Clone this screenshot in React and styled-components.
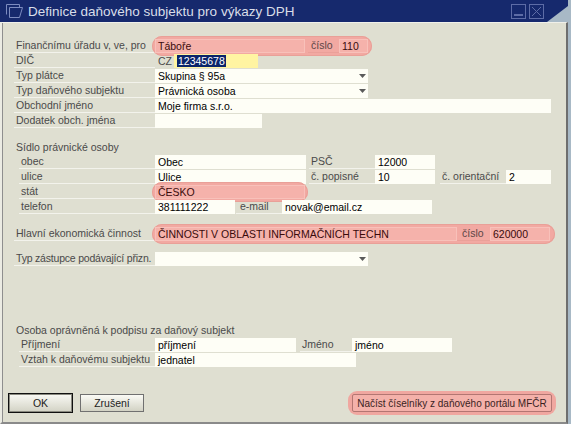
import React from "react";
import styled, { createGlobalStyle } from "styled-components";

const GlobalStyle = createGlobalStyle`
  html, body { margin: 0; padding: 0; background: #a8b9c6; }
  body { font-family: "Liberation Sans", Arial, sans-serif; font-size: 10.5px; }
  #root { width: 571px; height: 424px; overflow: hidden; }
  * { box-sizing: border-box; }
`;

const Window = styled.div`
  width: 568px;
  height: 424px;
  display: flex;
  flex-direction: column;
`;

const TitleBar = styled.div`
  flex: none;
  height: 22px;
  display: flex;
  align-items: center;
  padding-left: 6px;
  background: #16296d;
  color: #d9dee9;
  font-size: 13.5px;
  clip-path: polygon(0 0, 100% 0, 100% 6px, calc(100% - 21px) 100%, 0 100%);
`;

const TitleText = styled.span`
  margin-left: 5px;
`;

const TitleButtons = styled.div`
  margin-left: auto;
  margin-right: 24px;
  display: flex;
  gap: 3px;
`;

const Body = styled.div`
  flex: 1;
  display: flex;
  flex-direction: column;
  background: #dfdfd1;
  border-top: 1px solid #f0f0ea;
  border-left: 2px solid #ebebe3;
  border-right: 2px solid #6e6e6e;
  border-bottom: 2px solid #8a8a8a;
  box-shadow: inset 1px 0 0 #8e8e8e;
`;

const Form = styled.div`
  padding: 16px 0 0 12px;
`;

const Row = styled.div`
  display: flex;
  height: 14px;
  margin-top: ${(p) => p.$mt || 0}px;
  margin-bottom: 1px;
  padding-left: ${(p) => (p.$indent ? 5 : 0)}px;
`;

const Heading = styled.div`
  height: 14px;
  line-height: 14px;
  margin-top: ${(p) => p.$mt || 0}px;
  margin-bottom: 1px;
  padding-left: 2px;
  color: #4a4a4a;
`;

const Label = styled.div`
  flex: none;
  width: ${(p) => p.$w}px;
  margin-left: ${(p) => p.$ml || 0}px;
  padding-left: ${(p) => p.$pl ?? 2}px;
  height: 14px;
  line-height: 13px;
  color: #4a4a4a;
  letter-spacing: ${(p) => (p.$tight ? "-0.2px" : "0")};
  border-bottom: 1px solid #f3f3ec;
  white-space: nowrap;
  overflow: hidden;
`;

const Field = styled.div`
  flex: none;
  width: ${(p) => p.$w}px;
  height: 14px;
  line-height: 14px;
  padding-left: 3px;
  background: #fefef6;
  color: #000;
  white-space: nowrap;
  overflow: hidden;
`;

const Combo = styled(Field)`
  display: flex;
  align-items: center;
  padding-right: 2px;
`;

const Arrow = styled.svg`
  margin-left: auto;
  display: block;
`;

const Highlight = styled.div`
  display: flex;
  margin: -3px -${(p) => p.$pr}px -3px -3px;
  padding: 3px ${(p) => p.$pr}px 3px 3px;
  border-radius: 10px;
  background: #f2a9a2;
  box-shadow: inset 0 0 0 1px #e9a098;
`;

const PinkField = styled(Field)`
  background: #f5b2ab;
  box-shadow: inset 0 0 0 1px #f8c1ba;
  color: #3a0b0b;
`;

const PinkLabel = styled(Label)`
  color: #5b4646;
  border-bottom-color: #eaa099;
`;

const Prefix = styled.div`
  flex: none;
  width: 19px;
  padding-left: 3px;
  line-height: 14px;
  color: #4a4a4a;
`;

const YellowField = styled(Field)`
  background: #fff4a2;
`;

const Selected = styled.span`
  background: #0a246a;
  color: #fff;
  padding: 0 1px;
`;

const Footer = styled.div`
  display: flex;
  align-items: center;
  gap: 7px;
  margin-top: 23px;
  padding: 0 10px 0 6px;
`;

const Button = styled.button`
  font-family: "Liberation Sans", Arial, sans-serif;
  font-size: 10.5px;
  width: ${(p) => p.$w}px;
  height: ${(p) => p.$h}px;
  padding: 0;
  color: #222;
  background: linear-gradient(#fafaf5, #d2d2c4);
  border: 1px solid ${(p) => (p.$default ? "#111" : "#707070")};
  box-shadow: ${(p) => (p.$default ? "inset 0 0 0 1px #8a8a80" : "none")};
`;

const Glow = styled.div`
  margin-left: auto;
  padding: 3px 4px;
  border-radius: 9px;
  background: #f0a7a0;
`;

const PortalButton = styled.button`
  display: block;
  font-family: "Liberation Sans", Arial, sans-serif;
  font-size: 10px;
  white-space: nowrap;
  width: 200px;
  height: 18px;
  padding: 0;
  color: #3a1f1f;
  background: #f4b1aa;
  border: 1px solid #b37672;
  border-radius: 2px;
`;

const ComboArrow = () => (
  <Arrow width="7" height="4" viewBox="0 0 7 4">
    <polygon points="0,0 7,0 3.5,4" fill="#5a5a5a" />
  </Arrow>
);

export default function App() {
  return (
    <>
      <GlobalStyle />
      <Window>
        <TitleBar>
          <svg width="17" height="14" viewBox="0 0 17 14" fill="none" stroke="#7d8cc0" strokeWidth="1">
            <path d="M0.5 10.5 V0.5 H13.5 V3.5" />
            <path d="M3.5 3.5 H16.5 L13.5 13.5 H3.5 Z" />
          </svg>
          <TitleText>Definice daňového subjektu pro výkazy DPH</TitleText>
          <TitleButtons>
            <svg width="15" height="15" viewBox="0 0 15 15" fill="none">
              <rect x="0.5" y="0.5" width="14" height="14" stroke="#5d6ca6" />
              <rect x="3" y="10" width="9" height="2" fill="#5d6ca6" />
            </svg>
            <svg width="15" height="15" viewBox="0 0 15 15" fill="none">
              <rect x="0.5" y="0.5" width="14" height="14" stroke="#5d6ca6" />
              <path d="M3 3 L12 12 M12 3 L3 12" stroke="#5d6ca6" />
            </svg>
          </TitleButtons>
        </TitleBar>
        <Body>
          <Form>
            <Row>
              <Label $w={141}>Finančnímu úřadu v, ve, pro</Label>
              <Highlight $pr={4}>
                <PinkField $w={150}>Táboře</PinkField>
                <PinkLabel $w={31} $ml={3} $pl={3}>číslo</PinkLabel>
                <PinkField $w={29}>110</PinkField>
              </Highlight>
            </Row>
            <Row>
              <Label $w={141}>DIČ</Label>
              <Prefix>CZ</Prefix>
              <YellowField $w={84}>
                <Selected>12345678</Selected>
              </YellowField>
            </Row>
            <Row>
              <Label $w={141}>Typ plátce</Label>
              <Combo $w={213}>
                Skupina § 95a
                <ComboArrow />
              </Combo>
            </Row>
            <Row>
              <Label $w={141}>Typ daňového subjektu</Label>
              <Combo $w={213}>
                Právnická osoba
                <ComboArrow />
              </Combo>
            </Row>
            <Row>
              <Label $w={141}>Obchodní jméno</Label>
              <Field $w={396}>Moje firma s.r.o.</Field>
            </Row>
            <Row>
              <Label $w={141}>Dodatek obch. jména</Label>
              <Field $w={107} />
            </Row>

            <Heading $mt={12}>Sídlo právnické osoby</Heading>
            <Row $indent>
              <Label $w={136}>obec</Label>
              <Field $w={151}>Obec</Field>
              <Label $w={66} $ml={3}>PSČ</Label>
              <Field $w={60}>12000</Field>
            </Row>
            <Row $indent>
              <Label $w={136}>ulice</Label>
              <Field $w={151}>Ulice</Field>
              <Label $w={66} $ml={3}>č. popisné</Label>
              <Field $w={60}>10</Field>
              <Label $w={66} $ml={5}>č. orientační</Label>
              <Field $w={45}>2</Field>
            </Row>
            <Row $indent>
              <Label $w={136}>stát</Label>
              <Highlight $pr={3}>
                <PinkField $w={150}>ČESKO</PinkField>
              </Highlight>
            </Row>
            <Row $indent>
              <Label $w={136}>telefon</Label>
              <Field $w={80}>381111222</Field>
              <Label $w={46} $ml={1} $pl={4}>e-mail</Label>
              <Field $w={150}>novak@email.cz</Field>
            </Row>

            <Row $mt={13}>
              <Label $w={141}>Hlavní ekonomická činnost</Label>
              <Highlight $pr={5}>
                <PinkField $w={302}>ČINNOSTI V OBLASTI INFORMAČNÍCH TECHN</PinkField>
                <PinkLabel $w={33} $pl={5}>číslo</PinkLabel>
                <PinkField $w={60}>620000</PinkField>
              </Highlight>
            </Row>
            <Row $mt={11}>
              <Label $w={141} $tight>Typ zástupce podávající přizn.</Label>
              <Combo $w={213}>
                <ComboArrow />
              </Combo>
            </Row>

            <Heading $mt={57}>Osoba oprávněná k podpisu za daňový subjekt</Heading>
            <Row $indent>
              <Label $w={136}>Příjmení</Label>
              <Field $w={141}>příjmení</Field>
              <Label $w={52} $ml={4}>Jméno</Label>
              <Field $w={100}>jméno</Field>
            </Row>
            <Row $indent>
              <Label $w={136}>Vztah k daňovému subjektu</Label>
              <Field $w={201}>jednatel</Field>
            </Row>
          </Form>
          <Footer>
            <Button $w={65} $h={20} $default>OK</Button>
            <Button $w={64} $h={18}>Zrušení</Button>
            <Glow>
              <PortalButton>Načíst číselníky z daňového portálu MFČR</PortalButton>
            </Glow>
          </Footer>
        </Body>
      </Window>
    </>
  );
}
